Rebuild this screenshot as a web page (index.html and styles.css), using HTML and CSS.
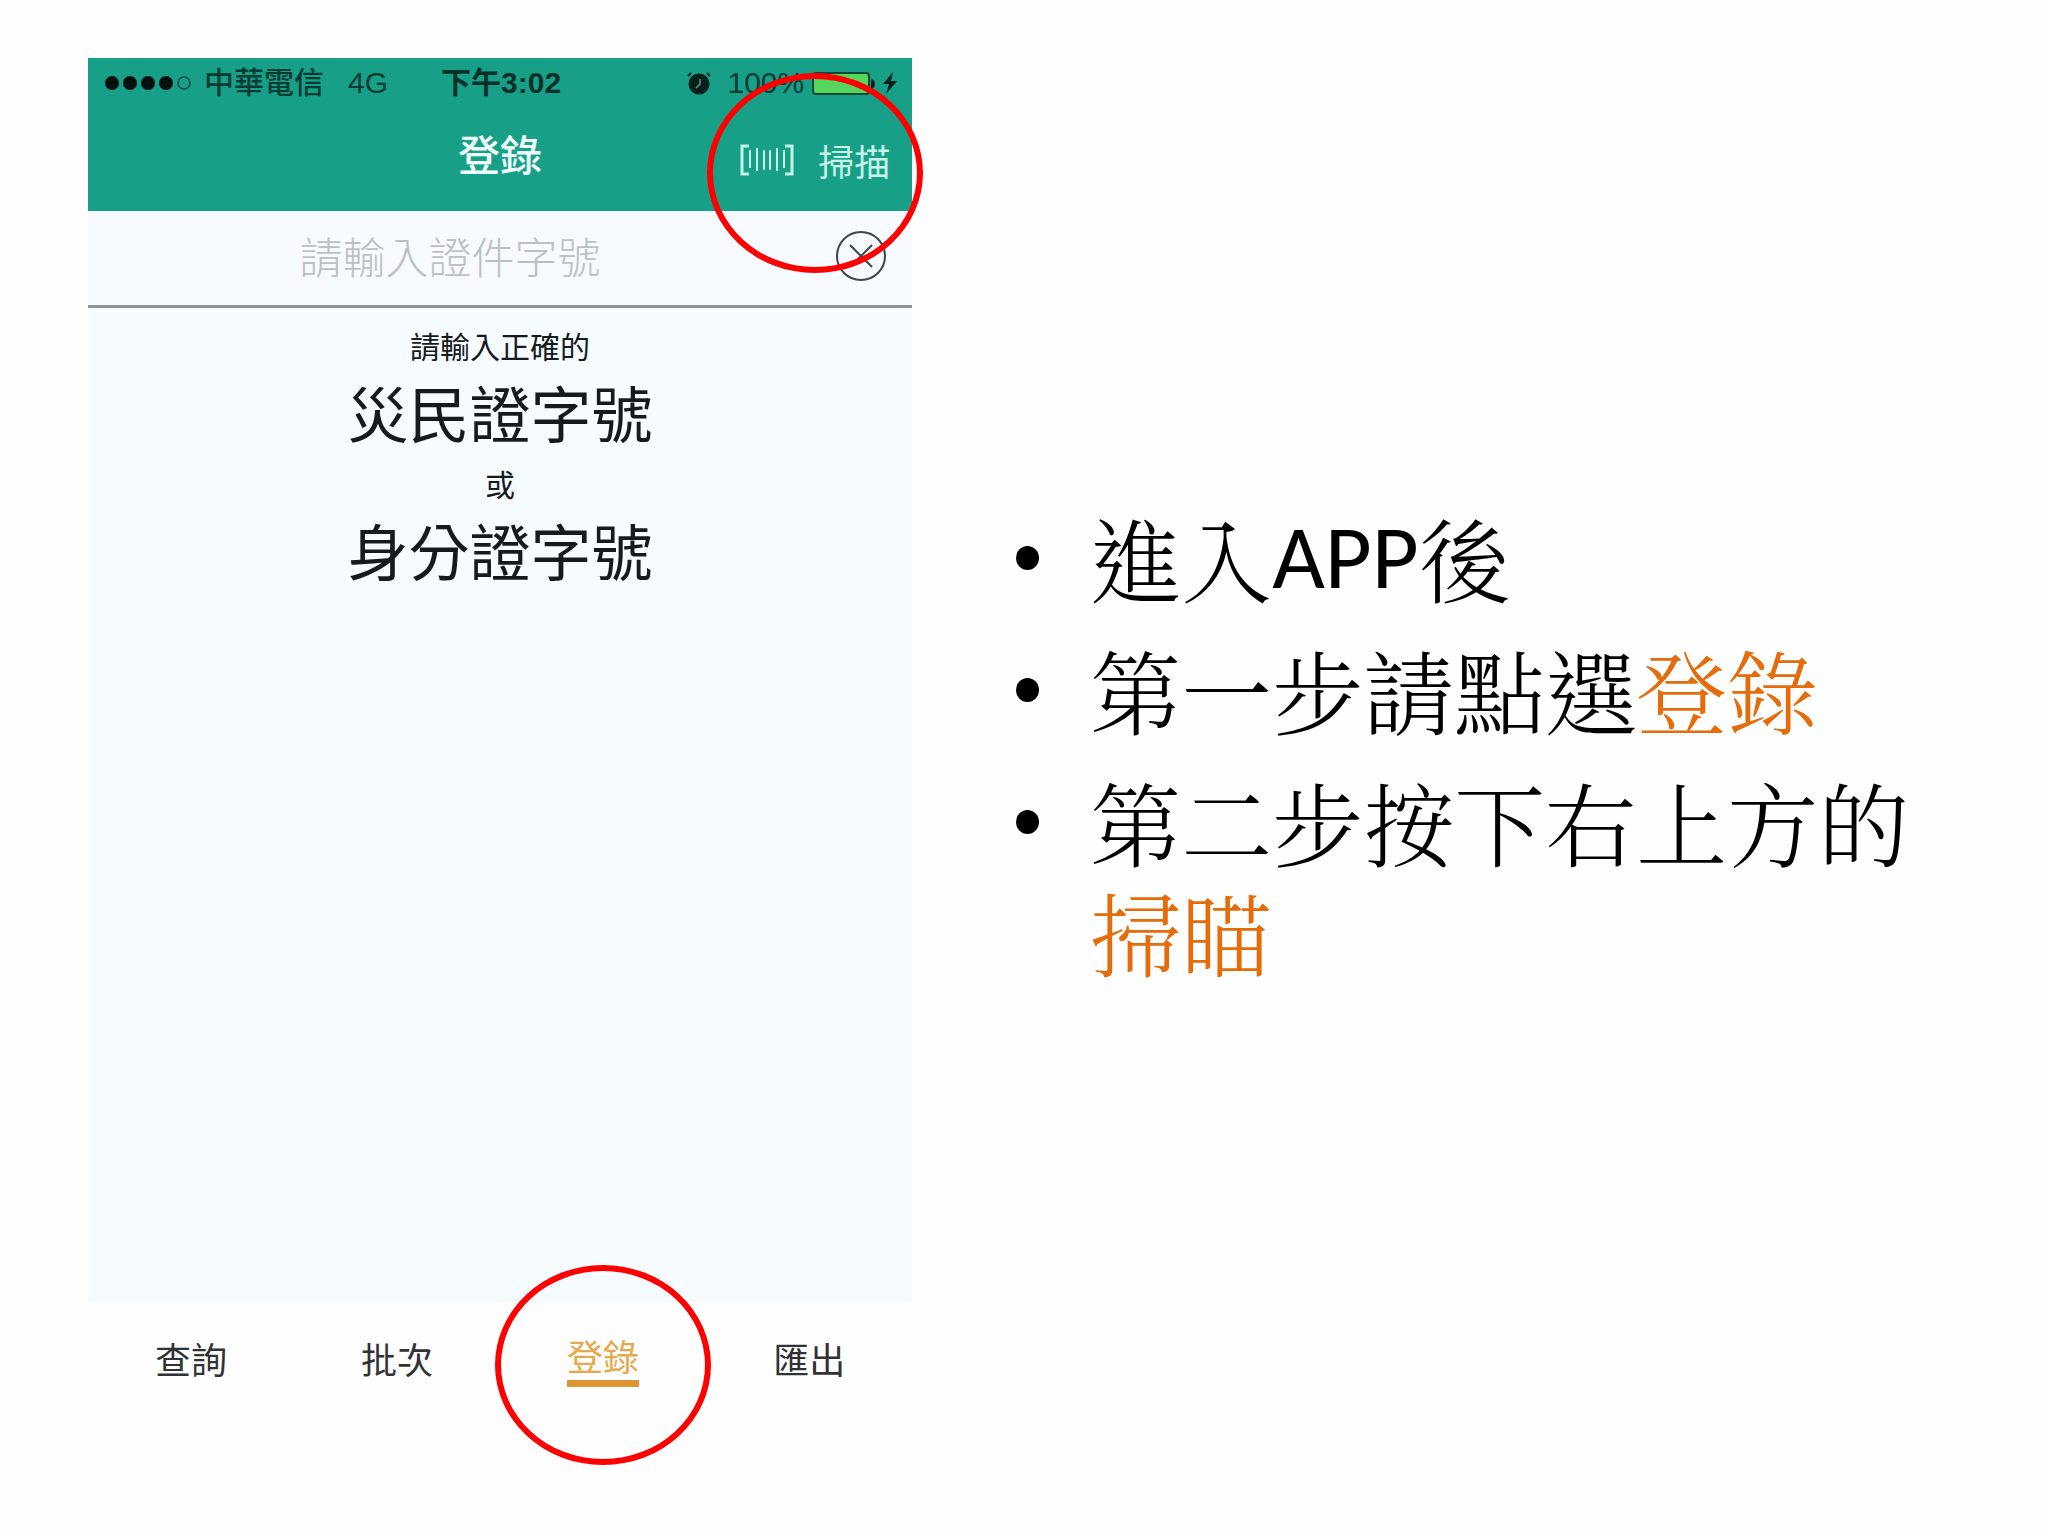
FILE: index.html
```html
<!DOCTYPE html>
<html lang="zh-Hant">
<head>
<meta charset="utf-8">
<meta name="viewport" content="width=device-width, initial-scale=1">
<title>登錄</title>
<link rel="stylesheet" href="styles.css">
</head>
<body>
<main class="slide">
  <section class="phone">
    <header class="topbar">
      <div class="status">
        <div class="status-left">
          <svg class="signal" width="88" height="16" viewBox="0 0 88 16" aria-hidden="true">
            <circle cx="8" cy="8" r="7"/><circle cx="26" cy="8" r="7"/><circle cx="44" cy="8" r="7"/><circle cx="62" cy="8" r="7"/>
            <circle cx="80" cy="8" r="6" fill="none" stroke="#0b4a40" stroke-width="1.5"/>
          </svg>
          <span class="carrier">中華電信</span>
          <span>4G</span>
        </div>
        <time class="clock">下午3:02</time>
        <div class="status-right">
          <svg width="24" height="24" viewBox="0 0 24 24" aria-hidden="true">
            <circle cx="12" cy="13" r="10.500" fill="#06201c"/>
            <path d="M1 5 4 2M23 5 20 2" stroke="#06201c" stroke-width="2" fill="none"/>
            <path d="M13 8v5l-4 4" stroke="#6f8d86" stroke-width="1.500" fill="none"/>
          </svg>
          <span class="percent">100%</span>
          <svg width="64" height="24" viewBox="0 0 64 24" aria-hidden="true">
            <rect x="1" y="2" width="56" height="21" rx="3" fill="#56d65c" stroke="#0b4a35" stroke-width="2"/>
            <path d="M59 8q4 1 4 5t-4 5z" fill="#06201c"/>
          </svg>
          <svg class="bolt" width="16" height="22" viewBox="0 0 16 22" aria-hidden="true">
            <path d="M11 0 1 12h6L4 22 15 9H9z" fill="#06201c"/>
          </svg>
        </div>
      </div>
      <div class="titlebar">
        <h1 class="title">登錄</h1>
        <button class="scan" type="button">
          <svg width="54" height="32" viewBox="0 0 54 32" fill="none" stroke="#c4f5e8" stroke-width="3" aria-hidden="true">
            <path d="M9 2H2v28h7M45 2h7v28h-7"/>
            <path d="M10 6v18M17 4v23M24 6v20M30 6v20M37 4v23M44 6v18" stroke-width="2"/>
          </svg>
          <span class="scan-label">掃描</span>
          <span class="ring ring-scan"></span>
        </button>
      </div>
    </header>
    <form class="search">
      <input class="search-input" type="text" placeholder="請輸入證件字號" aria-label="證件字號">
      <button class="clear" type="reset" aria-label="清除">
        <svg width="50" height="50" viewBox="0 0 50 50" fill="none" stroke="#3c4648" stroke-width="2" aria-hidden="true">
          <circle cx="25" cy="25" r="24"/>
          <path d="M14 14 36 36M36 14 14 36"/>
        </svg>
      </button>
    </form>
    <div class="hint">
      <p class="hint-small">請輸入正確的</p>
      <p class="hint-big">災民證字號</p>
      <p class="hint-small">或</p>
      <p class="hint-big">身分證字號</p>
    </div>
    <nav class="tabs">
      <a class="tab" href="#query">查詢</a>
      <a class="tab" href="#batch">批次</a>
      <a class="tab tab-active" href="#login" aria-current="page"><span class="tab-label">登錄</span><span class="ring"></span></a>
      <a class="tab" href="#export">匯出</a>
    </nav>
  </section>
  <ul class="steps">
    <li>進入<span class="latin">APP</span>後</li>
    <li>第一步請點選<em>登錄</em></li>
    <li>第二步按下右上方的<em>掃瞄</em></li>
  </ul>
</main>
</body>
</html>
```
FILE: styles.css
```css
* { box-sizing: border-box; }

body {
  margin: 0;
  background: #fefefe;
  color: #000;
  font-family: "Liberation Sans", "Noto Sans CJK TC", sans-serif;
}

button, input { font: inherit; border: 0; padding: 0; background: none; }
svg { display: block; flex: none; }

.slide {
  display: grid;
  grid-template-columns: 47fr 53fr;
  column-gap: 104px;
  min-height: 100vh;
  padding: 58px 5% 72px 88px;
}

.phone {
  display: flex;
  flex-direction: column;
}

/* Green header */
.topbar {
  height: 153px;
  background: #189f88;
}

.status {
  display: grid;
  grid-template-columns: 1fr auto 1fr;
  align-items: center;
  height: 50px;
  padding: 0 14px 0 16px;
  color: #073a32;
  font-size: 30px;
  font-weight: 500;
  line-height: 50px;
}

.status-left, .status-right { display: flex; align-items: center; }
.status-right { justify-content: flex-end; }
.signal { fill: #04100f; }
.carrier { margin: 0 24px 0 12px; }
.clock { font-weight: 700; color: #06302a; }
.percent { margin: 0 8px 0 16px; }
.bolt { margin-left: 6px; }

.titlebar {
  display: grid;
  grid-template-columns: 1fr auto 1fr;
  align-items: center;
  height: 98px;
  padding: 0 22px;
}

.title {
  grid-column: 2;
  margin: 0;
  color: #effffb;
  font-size: 42px;
  font-weight: 500;
  line-height: 96px;
}

.scan {
  position: relative;
  display: flex;
  align-items: center;
  justify-self: end;
  gap: 24px;
  padding-top: 6px;
  color: #c4f5e8;
  font-size: 36px;
  line-height: 48px;
}

.scan-label { padding-top: 8px; }

/* Red annotation ellipse laid over its control */
.ring {
  position: absolute;
  top: 50%;
  left: 50%;
  z-index: 1;
  width: 216px;
  height: 200px;
  border: 6px solid #f00;
  border-radius: 50%;
  transform: translate(-50%, -50%);
  pointer-events: none;
}

.ring-scan { top: 75%; }

/* Search row */
.search {
  display: flex;
  align-items: center;
  gap: 24px;
  height: 97px;
  padding: 0 26px 4px 0;
  border-bottom: 3px solid #8b939b;
  background: #f7fbff;
}

.search-input {
  flex: 1;
  min-width: 0;
  height: 72px;
  padding-top: 6px;
  color: #333;
  font-size: 43px;
  font-weight: 300;
  text-align: center;
}

.search-input::placeholder { color: #bcc0c4; opacity: 1; }

/* Instructions */
.hint {
  flex: 1;
  padding-top: 16px;
  background: #f6fbff;
  color: #151a1d;
  text-align: center;
}

.hint p { margin: 0; }
.hint-small { font-size: 30px; line-height: 48px; }
.hint-big { font-size: 61px; line-height: 90px; }

/* Bottom tabs */
.tabs {
  display: grid;
  grid-template-columns: repeat(4, 1fr);
  height: 162px;
  padding-top: 36px;
}

.tab {
  position: relative;
  height: 54px;
  color: #303234;
  font-size: 36px;
  line-height: 48px;
  text-align: center;
  text-decoration: none;
}

.tab-active {
  display: flex;
  align-items: flex-start;
  justify-content: center;
  color: #e5a94b;
}

.tab-label {
  border-bottom: 7px solid #dd9633;
  line-height: 42px;
}

/* Steps */
.steps {
  margin: 0;
  padding: 452px 0 0;
  list-style: none;
  font-family: "Liberation Sans", "Noto Serif CJK TC", "Noto Sans CJK TC", serif;
  font-size: 91px;
  font-weight: 300;
  line-height: 110px;
}

.steps li {
  position: relative;
  margin-bottom: 22px;
  padding-left: 74px;
}

.steps li::before {
  content: "";
  position: absolute;
  top: 36px;
  left: 0;
  width: 23px;
  height: 24px;
  border-radius: 50%;
  background: #000;
}

.steps em { color: #e46c0a; font-style: normal; }

.latin {
  font-family: Carlito, "Open Sans", sans-serif;
  font-weight: 400;
  line-height: 1;
  vertical-align: 8px;
}
```
